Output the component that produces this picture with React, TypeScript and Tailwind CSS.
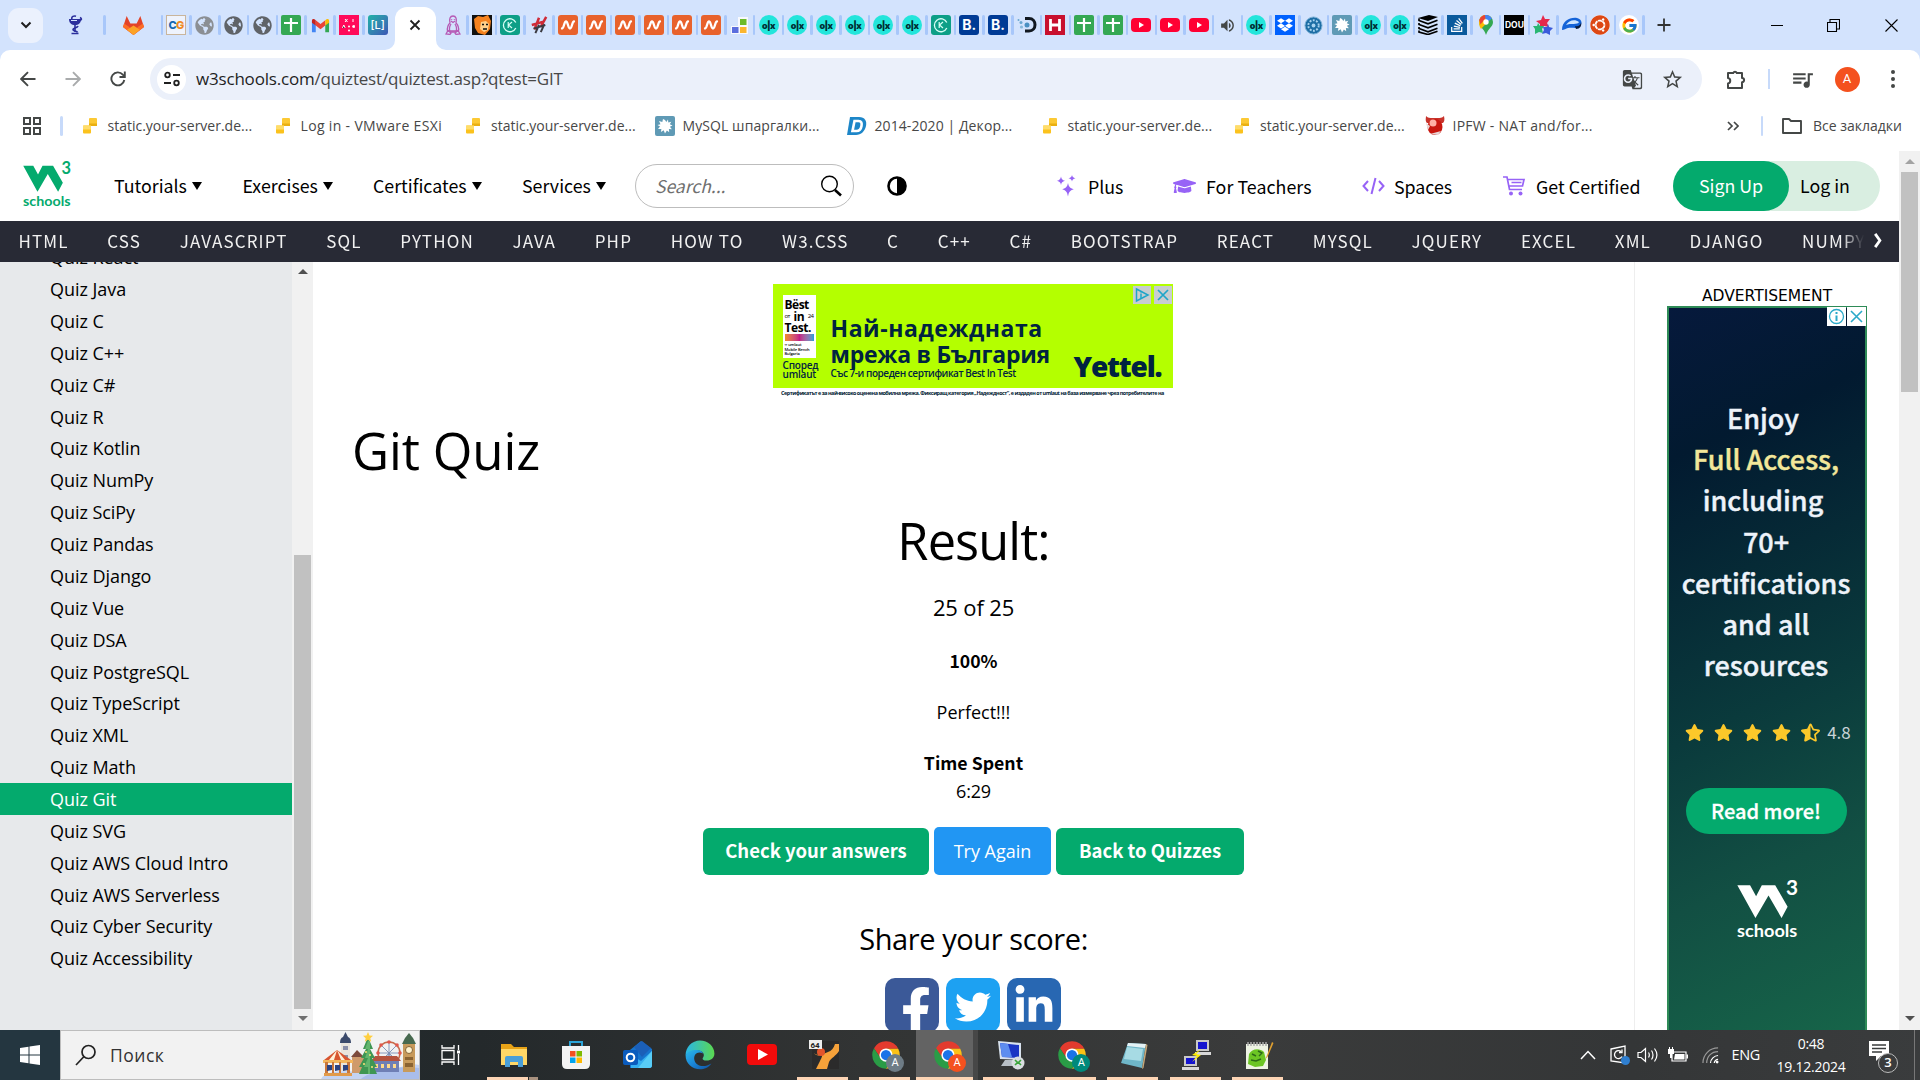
import React from "react";
import type { ReactNode } from "react";
import {
  FaDropbox, FaFacebookF, FaGlobeAmericas, FaGraduationCap, FaLinkedinIn,
  FaStackOverflow, FaStar, FaStarHalfAlt, FaTwitter, FaUbuntu,
} from "react-icons/fa";
import { FcGoogle } from "react-icons/fc";
import { MdGTranslate, MdOutlineStarBorder, MdQueueMusic, MdVolumeUp } from "react-icons/md";

/* ---------- tab favicons ---------- */

const Olx = () => (
  <span className="flex size-5 items-center justify-center rounded-full bg-[#23e5db] font-['Inter',sans-serif] text-[9px] leading-none font-black tracking-[-0.6px] text-[#002f34]">
    o|x
  </span>
);
const Orange = () => (
  <svg viewBox="0 0 20 20" className="size-5">
    <rect width="20" height="20" rx="3" fill="#e8622c" />
    <path d="M4 13.500c2 0 2-7 4-7s2 7 4 7 2-7 4-7" fill="none" stroke="#fff" strokeWidth="2.300" strokeLinecap="round" />
  </svg>
);
const Globe = ({ c = "text-[#5f6368]" }: { c?: string }) => <FaGlobeAmericas className={`size-[19px] ${c}`} />;
const GreenCross = () => (
  <svg viewBox="0 0 20 20" className="size-5">
    <rect width="20" height="20" rx="2" fill="#34a853" />
    <path d="M10 3v14M3 8h14" stroke="#fff" strokeWidth="2.200" />
  </svg>
);
const KCircle = () => (
  <svg viewBox="0 0 20 20" className="size-5">
    <rect width="20" height="20" rx="3" fill="#0d9f87" />
    <path d="M15.800 7.500A6.500 6.500 0 1 0 15.800 13" fill="none" stroke="#d7fff5" strokeWidth="1.300" />
    <path d="M8.200 7v6M12 7l-3.500 3L12 13" fill="none" stroke="#d7fff5" strokeWidth="1.200" />
  </svg>
);
const Booking = () => (
  <span className="flex size-5 items-center justify-center rounded-[3px] bg-[#003b95] font-['Inter',sans-serif] text-[14px] leading-none font-bold text-white">
    B.
  </span>
);
const Splat = () => (
  <svg viewBox="0 0 20 20" className="size-5">
    <rect width="20" height="20" rx="2" fill="#5f9ab5" />
    <path d="M10 4l1.300 2L13 3.500l.3 3 3-.8-1.500 2.600 2.700 1.200-2.600 1.200 2 2.600-3-.3.3 3.300-2.300-1.800L10 17.500l-1.300-3.200-2.800 1.800.5-3.200-3.400.2L5 10.500 2.500 9l3-.8L4 5l3.300 1L8 3z" fill="#fff" />
  </svg>
);
const Youtube = () => (
  <svg viewBox="0 0 20 20" className="size-5">
    <rect y="3" width="20" height="14" rx="4" fill="#ff0033" />
    <path d="M8 7l5 3-5 3z" fill="#fff" />
  </svg>
);
const Gitlab = () => (
  <svg viewBox="0 0 20 20" className="size-[21px]">
    <path d="M3.500 1L7 8h6l3.500-7L20 11.500 10 19 0 11.500z" fill="#e24329" />
    <path d="M0 11.500L1 8l5 3.500 4 7.500zM20 11.500L19 8l-5 3.500-4 7.500z" fill="#fc6d26" />
    <path d="M4 14l6-4 6 4-6 5z" fill="#fca326" />
  </svg>
);
const Chalice = () => (
  <svg viewBox="0 0 16 20" className="h-5 w-4">
    <path d="M2 4h12c0 4-2.500 6-6 6S2 8 2 4z" fill="#2b2f9c" />
    <path d="M5 4C4 1.500 7 .5 9 1.200M8 10v7M4.500 18.500h7M12 5.500c3 0 3-2 1-3" fill="none" stroke="#2b2f9c" strokeWidth="1.600" />
    <path d="M11 11c-1 2.500-5 1.500-5 3.500s4 1 4.500 3" fill="none" stroke="#2b2f9c" strokeWidth="1.700" />
    <path d="M4 5.500h6" stroke="#d3e3fd" strokeWidth="1" />
  </svg>
);
const Cg = () => (
  <span className="flex size-5 items-center justify-center border border-[#c9b59c] bg-[#eef3fd] font-['Inter',sans-serif] text-[11px] leading-none font-extrabold tracking-[-0.5px] text-[#1668b1]">
    C<span className="text-[#f08a24]">G</span>
  </span>
);
const PinkDots = () => (
  <svg viewBox="0 0 20 20" className="size-5">
    <rect width="20" height="20" fill="#ff0a5a" />
    <path d="M6 4l2.500 3M8.500 4L6 7M14 4v3M3.500 13l1.300-3 1.300 3M15 10v3" stroke="#fff" strokeWidth="1" />
    <circle cx="10" cy="11.500" r="1" fill="#fff" /><circle cx="10" cy="15.500" r="1" fill="#fff" /><circle cx="14.500" cy="11.500" r="1.300" fill="#fff" />
  </svg>
);
const LBracket = () => (
  <span className="flex size-5 items-center justify-center rounded-[3px] bg-linear-to-br from-[#1fb2a6] to-[#3b55b5] font-['Inter',sans-serif] text-[11px] leading-none font-medium text-white">
    [L]
  </span>
);
const Gmail = () => (
  <svg viewBox="0 0 20 20" className="size-[19px]">
    <path d="M1 5v12h4V9.500z" fill="#4285f4" />
    <path d="M19 5v12h-4V9.500z" fill="#34a853" />
    <path d="M5 10V4.500l5 4 5-4V10l-5 4z" fill="#ea4335" />
    <path d="M1 5c0-2 2-2.500 4-.5V10L1 7z" fill="#c5221f" />
    <path d="M19 5c0-2-2-2.500-4-.5V10l4-3z" fill="#fbbc04" />
  </svg>
);
const PinkPenguin = () => (
  <svg viewBox="0 0 16 20" className="h-5 w-4" fill="none" stroke="#b65ab5" strokeWidth="1.300">
    <path d="M5 8C4 4 5 1 8 1s4 3 3 7c2 2 3 5 2.500 8h-11C2 13 3 10 5 8z" />
    <path d="M6 9c-2 3-2 5-1 8M10 9c2 3 2 5 1 8M6 6l2 1.500L10 6M5.500 17h5" />
    <path d="M1 19l2-3.500L6 18l-1 1.400zM15 19l-2-3.500L10 18l1 1.400z" />
    <path d="M6.500 4v.8M9.500 4v.8" strokeWidth="1.500" />
  </svg>
);
const Lion = () => (
  <svg viewBox="0 0 20 20" className="size-5">
    <rect width="20" height="20" fill="#111" />
    <path d="M2 4l4-3 5 1 5-2 3 6-1 8-5 6-7-2-3-5z" fill="#f5821f" />
    <path d="M9 7l5-1 3 3-1 6-4 2-4-3z" fill="#ffd08a" />
    <path d="M10 9.500h2M14 9.500h2M11 14h4" stroke="#111" strokeWidth="1.400" />
  </svg>
);
const HSlash = () => (
  <svg viewBox="0 0 20 20" className="size-[18px]">
    <path d="M5 15l5-13M2 10l14-4M12 12l6-11" stroke="#cf2a37" strokeWidth="2.800" />
    <path d="M6 19l4-9M4 14l13-4M12 18l4-9" stroke="#3a3a42" strokeWidth="2.200" />
  </svg>
);
const Squares = () => (
  <svg viewBox="0 0 20 20" className="size-5">
    <path d="M1 11h7V2h10v17H1z" fill="#f8f9fd" />
    <rect x="10" y="4" width="6.500" height="6" fill="#6cbb2a" />
    <rect x="2" y="12" width="6.500" height="6" fill="#5b6ede" />
    <rect x="10" y="12" width="6.500" height="6" fill="#fbb62f" />
  </svg>
);
const DDots = () => (
  <svg viewBox="0 0 20 20" className="size-5">
    <path d="M8 3.500h4c8 0 8 12.500 0 12.500H8" fill="none" stroke="#111820" strokeWidth="3" />
    <circle cx="10" cy="10" r="2.500" fill="#4a90c2" />
    <circle cx="4" cy="7.500" r="1.500" fill="#6aa7d0" /><circle cx="4.500" cy="12" r="1.600" fill="#88b9dc" />
    <circle cx="1.500" cy="5" r="1" fill="#6aa7d0" />
  </svg>
);
const RedH = () => (
  <svg viewBox="0 0 20 20" className="size-5">
    <rect width="20" height="20" fill="#c8102e" />
    <path d="M5.500 4v12M14.500 4v12M5.500 10h9" stroke="#fff" strokeWidth="2.800" />
  </svg>
);
const BlueDotCircle = () => (
  <svg viewBox="0 0 20 20" className="size-[19px]">
    <circle cx="10" cy="10" r="9" fill="#1d6ea5" stroke="#7fb3d8" strokeWidth="1" />
    <circle cx="10" cy="10" r="5.500" fill="none" stroke="#a8d3ef" strokeWidth="2" strokeDasharray="2 1.500" />
    <circle cx="10" cy="10" r="2" fill="#a8d3ef" />
  </svg>
);
const StackedLayers = () => (
  <svg viewBox="0 0 20 20" className="size-5">
    <path d="M0 3l11-3 9 2-10 4z" fill="#000" />
    <path d="M1 3.500v2l9 3.300 9.500-3.600M1 8v1.500l9 3.300 9.500-3.600M1 12v1.500l9 3.300 9.500-3.600M1 15.500V17l9 2.500 9.500-3.300" fill="none" stroke="#000" strokeWidth="1.700" />
  </svg>
);
const MapPin = () => (
  <svg viewBox="0 0 20 20" className="size-5">
    <path d="M10 0a7 7 0 0 0-7 7c0 5 5 6 7 13 2-7 7-8 7-13a7 7 0 0 0-7-7z" fill="#34a853" />
    <path d="M3.200 5.500A7 7 0 0 1 10 0a7 7 0 0 1 5.500 2.700L5 14C3.800 12 3 10 3 7z" fill="#fbbc04" />
    <path d="M4.600 2.600A7 7 0 0 1 12 .3L4.500 9.500 3.200 5z" fill="#ea4335" />
    <path d="M9 0a7 7 0 0 1 7 3.500L10 8z" fill="#4285f4" />
    <circle cx="10" cy="7" r="2.700" fill="#fff" />
  </svg>
);
const Dou = () => (
  <span className="flex size-5 items-center justify-center bg-black font-['Inter',sans-serif] text-[8.500px] leading-none font-bold text-white">DOU</span>
);
const Stars = () => (
  <svg viewBox="0 0 20 20" className="size-5">
    <path d="M10 0l2 4 5 0-3 4 2 4-5-1-4 3 0-5-4-3 5-1z" fill="#e6294b" />
    <path d="M5 8l2 3 4 0-2 3 1 4-4-1-4 2 0-5-2-3 4 0z" fill="#2bb673" />
    <path d="M15 9l1 3 4 1-3 3 0 4-4-2-4 1 2-4-1-3 4 0z" fill="#3b5bdb" />
  </svg>
);
const Swoosh = () => (
  <svg viewBox="0 0 20 20" className="size-5">
    <path d="M0 15C0 6 8 2 15 3c5 1 6 6 2 9-3 2-7 0-11 1-2 .5-4 2-6 2z" fill="#1463d8" />
    <path d="M4 10c3-5 9-6 13-3-1 3-9 1-13 3z" fill="#cfe6ff" />
    <path d="M13 11c3 1 6-1 6-4 1 4-1 7-5 7z" fill="#0a1c3d" />
  </svg>
);

const leftTabs: ReactNode[] = [
  <Cg />, <Globe c="text-[#8b8f94]" />, <Globe />, <Globe />, <GreenCross />, <Gmail />, <PinkDots />, <LBracket />,
];
const rightTabs: ReactNode[] = [
  <PinkPenguin />, <Lion />, <KCircle />, <HSlash />,
  <Orange />, <Orange />, <Orange />, <Orange />, <Orange />, <Orange />, <Squares />,
  <Olx />, <Olx />, <Olx />, <Olx />, <Olx />, <Olx />, <KCircle />, <Booking />, <Booking />, <DDots />, <RedH />,
  <GreenCross />, <GreenCross />, <Youtube />, <Youtube />, <Youtube />, <MdVolumeUp className="size-[17px] text-[#444746]" />, <Olx />,
  <span className="flex size-5 items-center justify-center bg-[#0061fe]"><FaDropbox className="size-4 text-white" /></span>,
  <BlueDotCircle />, <Splat />, <Olx />, <Olx />, <StackedLayers />,
  <span className="flex size-5 items-center justify-center bg-[#0a5a9c]"><FaStackOverflow className="size-4 text-white" /></span>,
  <MapPin />, <Dou />, <Stars />, <Swoosh />,
  <span className="flex size-5 items-center justify-center rounded-full bg-white"><FaUbuntu className="size-5 text-[#dd4814]" /></span>,
  <span className="flex size-5 items-center justify-center rounded-full bg-white"><FcGoogle className="size-[17px]" /></span>,
];

const Sep = () => <span className="h-5 w-[2.500px] shrink-0 rounded-full bg-[#a8c7fa]" />;

function TabStrip() {
  return (
    <div className="flex h-[50px] items-center bg-[#d3e3fd] pl-2">
      <div className="flex size-[35px] shrink-0 items-center justify-center rounded-[11px] bg-[#ebf1fd]">
        <svg viewBox="0 0 12 12" className="size-3"><path d="M1.500 3.500L6 8l4.500-4.500" fill="none" stroke="#1f1f1f" strokeWidth="2" /></svg>
      </div>
      <div className="flex w-[60px] shrink-0 items-center justify-center pl-[3px]"><Chalice /></div>
      <Sep />
      <div className="flex w-[55px] shrink-0 items-center justify-center"><Gitlab /></div>
      {leftTabs.map((icon, i) => (
        <div key={i} className="flex w-[28.800px] shrink-0 items-center">
          <Sep />
          <div className="flex flex-1 items-center justify-center">{icon}</div>
        </div>
      ))}
      <div className="flex h-full w-[62px] shrink-0 items-end">
        <svg viewBox="0 0 10 10" className="ml-[-6px] size-[10px] shrink-0"><path d="M0 10A10 10 0 0 0 10 0V10z" fill="#fff" /></svg>
        <div className="flex h-[43px] w-[41px] shrink-0 items-center justify-center rounded-t-[12px] bg-white pb-[7px]">
          <svg viewBox="0 0 12 12" className="size-3"><path d="M1.500 1.500l9 9M10.500 1.500l-9 9" stroke="#1f1f1f" strokeWidth="1.800" /></svg>
        </div>
        <svg viewBox="0 0 10 10" className="size-[10px] shrink-0"><path d="M10 10A10 10 0 0 1 0 0V10z" fill="#fff" /></svg>
      </div>
      <div className="ml-[-13px] flex shrink-0">
        {rightTabs.map((icon, i) => (
          <div key={i} className="flex w-[28.690px] shrink-0 items-center">
            <div className="flex flex-1 items-center justify-center">{icon}</div>
            <Sep />
          </div>
        ))}
      </div>
      <svg viewBox="0 0 14 14" className="ml-[12px] size-[14px] shrink-0"><path d="M7 .5v13M.5 7h13" stroke="#333" strokeWidth="1.800" /></svg>
      <div className="ml-auto flex items-center">
        <div className="flex w-[57px] justify-center"><span className="h-px w-3 bg-black" /></div>
        <div className="flex w-[57px] justify-center">
          <svg viewBox="0 0 13 13" className="size-[13px]"><path d="M.5 3.500h9v9h-9zM3 3V.5h9.500V10H10" fill="none" stroke="#000" strokeWidth="1.100" /></svg>
        </div>
        <div className="flex w-[58px] justify-center">
          <svg viewBox="0 0 13 13" className="size-[13px]"><path d="M.5.5l12 12M12.500.5l-12 12" stroke="#000" strokeWidth="1.100" /></svg>
        </div>
      </div>
    </div>
  );
}

function Toolbar() {
  return (
    <div className="bg-[#d3e3fd]">
      <div className="flex h-[58px] items-center rounded-t-[10px] bg-white">
        <div className="flex w-[150px] items-center pl-[20px]">
          <svg viewBox="0 0 16 16" className="size-4"><path d="M15.500 8H1.500M8 1.200L1.200 8 8 14.800" fill="none" stroke="#444746" strokeWidth="1.900" /></svg>
          <svg viewBox="0 0 16 16" className="ml-[29px] size-4"><path d="M.5 8h14M8 1.200L14.800 8 8 14.800" fill="none" stroke="#a9abac" strokeWidth="1.900" /></svg>
          <svg viewBox="0 0 16 16" className="ml-[29px] size-4"><path d="M14.300 9A6.500 6.500 0 1 1 12.800 3.600L14.500 5.400M14.800.5V6H9.500" fill="none" stroke="#444746" strokeWidth="1.900" /></svg>
        </div>
        <div className="flex h-[42px] w-[1552px] items-center rounded-full bg-[#ebf0fa] pl-[7px]">
          <div className="flex size-[29px] items-center justify-center rounded-full bg-white">
            <svg viewBox="0 0 16 16" className="size-4">
              <path d="M9 4h7M0 12h7" stroke="#1f1f1f" strokeWidth="1.800" />
              <circle cx="3.500" cy="4" r="2.300" fill="none" stroke="#1f1f1f" strokeWidth="1.800" />
              <circle cx="12.500" cy="12" r="2.300" fill="none" stroke="#1f1f1f" strokeWidth="1.800" />
            </svg>
          </div>
          <span className="ml-[10px] font-['Open_Sans',sans-serif] text-[17px] tracking-[-0.190px] text-[#474747]">
            <span className="text-[#1f1f1f]">w3schools.com</span>/quiztest/quiztest.asp?qtest=GIT
          </span>
          <MdGTranslate className="ml-auto size-[21px] text-[#444746]" />
          <MdOutlineStarBorder className="mr-[18px] ml-[18px] size-[23px] text-[#444746]" />
        </div>
        <svg viewBox="0 0 20 20" className="ml-[24px] size-5">
          <path d="M2 4h5.200a2 2 0 0 1 3.600 0H16v5a2 2 0 0 1 0 4.200V19H2v-4.500c3-.5 3-5 0-5.500z" fill="none" stroke="#444746" strokeWidth="2" strokeLinejoin="round" />
        </svg>
        <span className="ml-[22px] h-5 w-[1.500px] bg-[#c7dafa]" />
        <MdQueueMusic className="ml-[20px] size-[25px] text-[#444746]" />
        <span className="ml-[20px] flex size-[25px] items-center justify-center rounded-full bg-[#f4511e] font-['Roboto',sans-serif] text-[13px] text-white">A</span>
        <div className="ml-[31px] flex flex-col gap-[3px]">
          <i className="size-1 rounded-full bg-[#444746]" /><i className="size-1 rounded-full bg-[#444746]" /><i className="size-1 rounded-full bg-[#444746]" />
        </div>
      </div>
    </div>
  );
}

const YellowSquares = () => (
  <svg viewBox="0 0 16 16" className="size-4">
    <rect x="7" y="0" width="8" height="8" rx="1" fill="#fcc934" /><rect x="7" y="5.500" width="8" height="2.500" fill="#eab010" />
    <rect x="1" y="7.500" width="8" height="8" rx="1" fill="#fbc21d" /><rect x="1" y="7.500" width="8" height="4" fill="#ffdd6b" />
  </svg>
);
const DLogo = () => (
  <svg viewBox="0 0 20 20" className="size-5">
    <path d="M3 1h9c6 0 8 4 7 9s-5 9-10 9H0z" fill="#1d86c8" />
    <path d="M7.500 5h4c3 0 3.500 2 3 5s-2.500 5-5 5H5.500z" fill="none" stroke="#fff" strokeWidth="2.600" />
  </svg>
);
const Daemon = () => (
  <svg viewBox="0 0 20 20" className="size-5">
    <path d="M1 0c2 2 4 2 6 2h6c2 0 4 0 6-2 1 4 0 6-1 7H2C0 5 1 2 1 0z" fill="#c8332b" />
    <ellipse cx="10" cy="11" rx="7.500" ry="8" fill="#c9170f" /><circle cx="8" cy="7" r="3.500" fill="#ffb0a4" />
    <path d="M1 7l4 3-2 4zM5 18l8 1 3-4z" fill="#e8d6d6" />
  </svg>
);

const bookmarks: { icon: ReactNode; label: string; w: string }[] = [
  { icon: <YellowSquares />, label: "static.your-server.de...", w: "w-[193px]" },
  { icon: <YellowSquares />, label: "Log in - VMware ESXi", w: "w-[190.500px] tracking-[0.340px]" },
  { icon: <YellowSquares />, label: "static.your-server.de...", w: "w-[191.500px]" },
  { icon: <Splat />, label: "MySQL шпаргалки...", w: "w-[192px] tracking-[0.080px]" },
  { icon: <DLogo />, label: "2014-2020 | Декор...", w: "w-[193px] tracking-[0.080px]" },
  { icon: <YellowSquares />, label: "static.your-server.de...", w: "w-[192.500px]" },
  { icon: <YellowSquares />, label: "static.your-server.de...", w: "w-[192.500px]" },
  { icon: <Daemon />, label: "IPFW - NAT and/for...", w: "w-[190px] tracking-[0.250px]" },
];

function Bookmarks() {
  return (
    <div className="flex h-[43px] items-center bg-white pb-[8px] font-['Open_Sans',sans-serif] text-[14px] text-[#474747]">
      <svg viewBox="0 0 18 18" className="ml-[23px] size-[18px]">
        <path d="M1 1h6v6H1zM11 1h6v6h-6zM1 11h6v6H1zM11 11h6v6h-6z" fill="none" stroke="#444746" strokeWidth="2" />
      </svg>
      <span className="mr-[17px] ml-[19px] h-5 w-[2.500px] rounded bg-[#c7dafa]" />
      {bookmarks.map((b, i) => (
        <div key={i} className={`flex shrink-0 items-center gap-2 whitespace-nowrap ${b.w}`}>
          <span className="flex size-5 items-center justify-center">{b.icon}</span>
          <span className="relative top-[-0.500px]">{b.label}</span>
        </div>
      ))}
      <svg viewBox="0 0 12 12" className="mr-[22px] ml-auto size-3"><path d="M1 2l4 4-4 4M7 2l4 4-4 4" fill="none" stroke="#444746" strokeWidth="1.700" /></svg>
      <span className="h-5 w-[2.500px] rounded bg-[#c7dafa]" />
      <svg viewBox="0 0 20 16" className="mr-[11px] ml-[19px] h-4 w-5"><path d="M1 1h6l2 2h10v12H1z" fill="none" stroke="#444746" strokeWidth="1.900" strokeLinejoin="round" /></svg>
      <span className="relative top-[-0.500px] mr-[18px]">Все закладки</span>
    </div>
  );
}

/* ---------- w3schools page ---------- */

function W3Logo({ className }: { className: string }) {
  return (
    <svg viewBox="353 568 182 178" className={className} fill="currentColor">
      <path d="M354 586H392L410 619L427 586H467L504 650L486 684L447 617L408 684z" />
      <text x="499" y="616" fontSize="62" fontWeight="700" fontFamily="Lato, sans-serif" textLength="36" lengthAdjust="spacingAndGlyphs">3</text>
      <text x="353" y="740" fontSize="52" fontWeight="700" fontFamily="Lato, sans-serif" textLength="180" lengthAdjust="spacingAndGlyphs">schools</text>
    </svg>
  );
}

const Caret = () => <span className="ml-[5px] h-0 w-0 border-x-[5.500px] border-t-[8px] border-x-transparent border-t-black" />;

const menus = [
  ["Tutorials", "w-[128.500px]"], ["Exercises", "w-[130.500px]"], ["Certificates", "w-[149px]"], ["Services", "w-[113px]"],
];

function Header() {
  return (
    <div className="flex h-[70px] shrink-0 items-center bg-white font-['Noto_Sans_CJK_SC',sans-serif] text-[17.800px] text-black">
      <W3Logo className="mt-[-4px] ml-[22px] h-[47px] w-[50px] text-[#04aa6d]" />
      <div className="mt-[-1px] ml-[42px] flex">
        {menus.map(([m, w]) => (
          <div key={m} className={`flex items-center ${w}`}>{m}<Caret /></div>
        ))}
      </div>
      <div className="flex h-11 w-[219px] items-center rounded-[25px] border-[1.500px] border-[#bdbdbd] bg-white pr-[11px] pl-[19px]">
        <span className="text-[17.500px] text-[#6f6f6f] italic">Search...</span>
        <svg viewBox="0 0 22 22" className="ml-auto size-[22px]">
          <circle cx="9.500" cy="9" r="7.800" fill="none" stroke="#000" strokeWidth="1.400" /><path d="M15 15l6 5.500" stroke="#000" strokeWidth="2.600" />
        </svg>
      </div>
      <svg viewBox="0 0 20 20" className="ml-[33px] size-5">
        <circle cx="10" cy="10" r="8.500" fill="#fff" stroke="#000" strokeWidth="2.600" /><path d="M10 1.500a8.500 8.500 0 0 1 0 17z" fill="#000" />
      </svg>
      <div className="ml-[150px] flex w-[116px] items-center">
        <svg viewBox="0 0 20 22" className="h-[22px] w-5 text-[#9763f6]" fill="currentColor">
          <path d="M11 8c.9 3.800 1.700 5 5.800 6.300C12.700 15.600 11.900 17 11 21.500c-.9-4.500-1.700-5.900-5.800-7.200C9.300 13 10.100 11.800 11 8zM4 1.500c.6 2.600 1.200 3.500 4 4.300C5.200 6.700 4.600 7.500 4 10 3.400 7.500 2.800 6.700 0 5.800c2.800-.8 3.400-1.700 4-4.300zM15 0c.5 1.900 1 2.500 3.500 3.200C16 3.900 15.500 4.600 15 6.500c-.5-1.900-1-2.600-3.500-3.300C14 2.500 14.500 1.900 15 0z" />
        </svg>
        <span className="ml-[11px]">Plus</span>
      </div>
      <div className="flex w-[189px] items-center">
        <FaGraduationCap className="h-[20px] w-[23px] text-[#9763f6]" /><span className="ml-[10px] tracking-[0.050px]">For Teachers</span>
      </div>
      <div className="flex w-[141px] items-center">
        <svg viewBox="0 0 23 18" className="h-[18px] w-[23px]"><path d="M6 4L1.500 9 6 14M17 4l4.500 5L17 14M13.500 1l-4 16" fill="none" stroke="#9763f6" strokeWidth="2" /></svg>
        <span className="ml-[9px]">Spaces</span>
      </div>
      <div className="flex w-[170px] items-center">
        <svg viewBox="0 0 23 20" className="h-5 w-[23px]">
          <path d="M0 1h4l2.500 12.500H19M4.500 3.500H21L19.500 10H6M8.500 6.500h10" fill="none" stroke="#9763f6" strokeWidth="1.700" />
          <circle cx="8" cy="17.500" r="2" fill="#9763f6" /><circle cx="17.500" cy="17.500" r="2" fill="#9763f6" />
        </svg>
        <span className="ml-[10px] tracking-[0.050px]">Get Certified</span>
      </div>
      <div className="flex h-[50px] w-[207px] shrink-0 rounded-full bg-[#d9eee1]">
        <div className="flex w-[116px] items-center justify-center rounded-full bg-[#04aa6d] pb-px text-white">Sign Up</div>
        <div className="flex items-center pb-px pl-[11px]">Log in</div>
      </div>
    </div>
  );
}

const topics = [
  "HTML", "CSS", "JAVASCRIPT", "SQL", "PYTHON", "JAVA", "PHP", "HOW TO", "W3.CSS", "C", "C++", "C#",
  "BOOTSTRAP", "REACT", "MYSQL", "JQUERY", "EXCEL", "XML", "DJANGO", "NUMPY",
];

function TopicBar() {
  return (
    <div className="flex h-[41px] shrink-0 items-center bg-[#282a35] pb-[2px] font-['Noto_Sans_CJK_SC',sans-serif] text-[17px] tracking-[1.150px] text-[#f1f1f1]">
      <div className="flex w-[1866px] gap-[38.600px] overflow-hidden pl-[18.500px] whitespace-nowrap [mask-image:linear-gradient(to_right,#000_1842px,transparent_1864px)]">
        {topics.map((t) => <span key={t}>{t}</span>)}
      </div>
      <svg viewBox="0 0 10 16" className="ml-[7px] h-[15px] w-[10px]"><path d="M2 1l5 7-5 7" fill="none" stroke="#fff" strokeWidth="3" /></svg>
    </div>
  );
}

const quizzes = [
  "React", "Java", "C", "C++", "C#", "R", "Kotlin", "NumPy", "SciPy", "Pandas", "Django", "Vue", "DSA", "PostgreSQL",
  "TypeScript", "XML", "Math", "Git", "SVG", "AWS Cloud Intro", "AWS Serverless", "Cyber Security", "Accessibility",
];

function Sidebar() {
  return (
    <div className="flex w-[313px] shrink-0">
      <div className="w-[292px] overflow-hidden bg-[#e7e9eb] font-['Open_Sans',sans-serif] text-[18px] tracking-[-0.050px]">
        <div className="mt-[-20.500px]">
          {quizzes.map((q) => (
            <div key={q} className={`flex h-[31.870px] items-center pt-[0.800px] pl-[50px] ${q === "Git" ? "bg-[#04aa6d] text-white" : "text-black"}`}>
              Quiz {q}
            </div>
          ))}
        </div>
      </div>
      <div className="flex w-[21px] flex-col items-center bg-[#f1f1f1] pt-[7px] pb-[9px]">
        <span className="h-0 w-0 border-x-[5px] border-b-[5px] border-x-transparent border-b-[#505050]" />
        <span className="mt-auto h-[454px] w-[17px] bg-[#c1c1c1]" />
        <span className="mt-[7px] h-0 w-0 border-x-[5px] border-t-[5px] border-x-transparent border-t-[#707070]" />
      </div>
    </div>
  );
}

function Banner() {
  return (
    <div className="relative mt-[22px] mr-[2px] h-[115px] w-[400px]">
      <div className="flex h-[104px] overflow-hidden bg-[#b4ff00] font-['Open_Sans',sans-serif] text-[#002340]">
        <div className="w-[58px] shrink-0 pt-[11px] pl-[10px]">
          <div className="h-[63px] w-[33px] bg-white px-[2px] pt-[4px] text-[12px] leading-[12px] font-bold tracking-[-0.500px] text-black">
            Bëst
            <div className="flex items-center justify-between leading-[11px]"><small className="text-[6px] font-normal">от</small>in<small className="text-[6px] font-normal">24</small></div>
            <div className="leading-[11px] tracking-[-0.400px]">Test.</div>
            <div className="mt-px h-[7px] bg-linear-to-r from-[#f08a1d] via-[#c31c86] to-[#13a0d4]" />
            <div className="mt-[2px] text-[4px] leading-[4.500px] font-semibold tracking-[-0.100px] whitespace-nowrap">∞ umlaut<br />Mobile Bench<br />Bulgaria</div>
          </div>
          <div className="mt-[3px] text-[10px] leading-[9px] font-semibold tracking-[-0.200px]">Според<br />umlaut</div>
        </div>
        <div className="w-[243px] shrink-0 pt-[31px] whitespace-nowrap">
          <div className="text-[23px] leading-[26px] font-bold tracking-[0.550px]">Най-надеждната</div>
          <div className="text-[23px] leading-[26px] font-bold tracking-[-0.250px]">мрежа в България</div>
          <div className="text-[10px] leading-[12px] font-semibold tracking-[-0.460px]">Със 7-и пореден сертификат Best In Test</div>
        </div>
        <div className="pt-[61px] text-[28px] leading-[42px] font-extrabold tracking-[-1.150px]">Yettel.</div>
      </div>
      <div className="flex h-[11px] items-center justify-center text-center font-['Open_Sans',sans-serif] text-[5.400px] leading-none font-bold tracking-[-0.460px] whitespace-nowrap text-[#001a33]">
        Сертификатът е за най-високо оценена мобилна мрежа. Фиксиращ категория „Надеждност“, е издаден от umlaut на база измерване чрез потребителите на
      </div>
      <div className="absolute top-[2px] right-px flex gap-[3px]">
        <svg viewBox="0 0 18 18" className="size-[18px] bg-[#c8cdd0]"><path d="M3.500 3l11.500 6-11.500 6z" fill="none" stroke="#1fa5c9" strokeWidth="1.500" /><path d="M8 7.500v5M8 5.500v1" stroke="#1fa5c9" strokeWidth="1.500" /></svg>
        <svg viewBox="0 0 18 18" className="size-[18px] bg-[#c8cdd0]"><path d="M4 4l10 10M14 4L4 14" stroke="#1fa5c9" strokeWidth="1.700" /></svg>
      </div>
    </div>
  );
}

function Main() {
  return (
    <div className="flex min-w-0 flex-1 flex-col items-center overflow-hidden bg-white font-['Open_Sans',sans-serif] text-[18px] text-black">
      <Banner />
      <h1 className="mt-[17px] h-[68px] self-start pl-[39px] text-[51px] leading-[68px] tracking-[-0.150px]">Git Quiz</h1>
      <h1 className="mt-[23px] h-[68px] text-[50.500px] leading-[68px] tracking-[-0.900px]">Result:</h1>
      <div className="mt-[16px] h-8 text-[22px] leading-8 tracking-[-0.150px]">25 of 25</div>
      <div className="mt-[24px] h-7 font-['Noto_Sans_CJK_SC',sans-serif] text-[17.600px] leading-7 font-bold">100%</div>
      <div className="mt-[23px] h-7 leading-7">Perfect!!!</div>
      <div className="mt-[22px] h-7 font-['Noto_Sans_CJK_SC',sans-serif] text-[17.700px] leading-7 font-bold">Time Spent</div>
      <div className="mt-px h-7 leading-7 tracking-[-0.200px]">6:29</div>
      <div className="mt-[22px] flex h-12 items-end gap-[5px] font-['Noto_Sans_CJK_SC',sans-serif] text-[18.500px] font-bold text-white">
        <div className="flex h-[47px] w-[226px] items-center justify-center rounded-[6px] bg-[#04aa6d] pb-px">Check your answers</div>
        <div className="flex h-12 w-[117px] items-center justify-center rounded-[5px] bg-[#2196f3] font-['Open_Sans',sans-serif] text-[18px] font-normal">Try Again</div>
        <div className="flex h-[47px] w-[188px] items-center justify-center rounded-[6px] bg-[#04aa6d] pb-px">Back to Quizzes</div>
      </div>
      <div className="mt-[44px] h-10 text-[29px] leading-10 tracking-[-0.400px]">Share your score:</div>
      <div className="mt-[19px] mr-px flex gap-[7px]">
        <div className="flex size-[54px] items-end justify-end rounded-[10px] bg-[#3b5998]"><FaFacebookF className="mr-[-1px] mb-[-3px] size-[48px] text-white" /></div>
        <div className="flex size-[54px] items-center justify-center rounded-[10px] bg-[#1da1f2] pt-[4px]"><FaTwitter className="size-[36px] text-white" /></div>
        <div className="flex size-[54px] items-center justify-center rounded-[10px] bg-[#2867b2] pt-[2px]"><FaLinkedinIn className="size-[42px] text-white" /></div>
      </div>
    </div>
  );
}

function SideAd() {
  return (
    <div className="flex w-[265px] shrink-0 flex-col items-center overflow-hidden border-l border-[#eee] bg-white">
      <div className="mt-[24px] h-5 font-['DejaVu_Sans',sans-serif] text-[15.500px] leading-5 text-black">ADVERTISEMENT</div>
      <div className="relative flex h-[760px] w-[200px] shrink-0 flex-col items-center border-[2.500px] border-[#2e8b57] bg-[linear-gradient(155deg,#06193c_0%,#021a30_18%,#0a3a3c_52%,#124f43_72%,#17684a_100%)] pr-[2px] font-['Noto_Sans_CJK_SC',sans-serif]">
        <div className="mt-[89px] text-center text-[27px] leading-[41.200px] font-medium text-[#eef3fa] [-webkit-text-stroke:0.400px]">
          <div>Enjoy&nbsp;</div>
          <div className="text-[#f2e79a]">Full Access,</div>
          <div>including&nbsp;</div>
          <div>70+</div>
          <div>certifications</div>
          <div>and all</div>
          <div>resources</div>
        </div>
        <div className="mt-[37px] flex h-5 items-center gap-[10px] pl-[4px] text-[#fcc82a]">
          <FaStar className="size-[19px]" /><FaStar className="size-[19px]" /><FaStar className="size-[19px]" /><FaStar className="size-[19px]" /><FaStarHalfAlt className="size-[19px]" />
          <span className="ml-[-3px] text-[17px] leading-5 text-[#c9d3d6]">4.8</span>
        </div>
        <div className="mt-[46px] flex h-[46px] w-[161px] items-center justify-center rounded-full bg-[#04aa6d] text-[20px] font-medium text-white [-webkit-text-stroke:0.300px]">Read more!</div>
        <W3Logo className="mt-[45px] ml-[2px] h-[60px] w-[61px] text-white" />
        <div className="absolute top-[-1px] right-[-1px] flex gap-px">
          <svg viewBox="0 0 19 19" className="size-[19px] bg-white"><circle cx="9.500" cy="9.500" r="7" fill="none" stroke="#2aa9c9" strokeWidth="1.300" /><path d="M9.500 8.500V14M9.500 5v2" stroke="#2aa9c9" strokeWidth="2" /></svg>
          <svg viewBox="0 0 19 19" className="size-[19px] bg-white"><path d="M4 4l11 11M15 4L4 15" stroke="#2aa9c9" strokeWidth="1.600" /></svg>
        </div>
      </div>
    </div>
  );
}

function PageScrollbar() {
  return (
    <div className="flex w-[21px] shrink-0 flex-col items-center bg-[#f1f1f1] pt-[8px] pb-[9px]">
      <span className="h-0 w-0 border-x-[5px] border-b-[5px] border-x-transparent border-b-[#a3a3a3]" />
      <span className="mt-[8px] h-[220px] w-[17px] bg-[#c1c1c1]" />
      <span className="mt-auto h-0 w-0 border-x-[5px] border-t-[5px] border-x-transparent border-t-[#505050]" />
    </div>
  );
}

/* ---------- Windows taskbar ---------- */

function Chrome({ badge }: { badge: string }) {
  return (
    <span className="relative">
      <svg viewBox="0 0 24 24" className="size-[30px]">
        <path d="M12 7h9.800A11 11 0 0 0 2.400 6.600l5.300 8z" fill="#e33b2e" />
        <path d="M12 7h9.800A11 11 0 0 1 12 23l4.300-8.500z" fill="#fbc116" />
        <path d="M7.670 14.500L2.400 6.600A11 11 0 0 0 12 23l4.330-8.500z" fill="#2a9c46" />
        <circle cx="12" cy="12" r="5.300" fill="#fff" /><circle cx="12" cy="12" r="4.100" fill="#1a73e8" />
      </svg>
      <span className={`absolute right-[-3px] bottom-[-2px] flex size-[18px] items-center justify-center rounded-full font-['Roboto',sans-serif] text-[11px] text-white ${badge}`}>A</span>
    </span>
  );
}

const FolderIcon = () => (
  <svg viewBox="0 0 28 28" className="size-7">
    <path d="M1 3h10l3 3h13v18H1z" fill="#e8a317" /><path d="M1 8h26v16H1z" fill="#ffd767" />
    <path d="M5 26v-9q0-2 2-2h14q2 0 2 2v9h-5v-5h-8v5z" fill="#4a9fd8" />
  </svg>
);
const StoreIcon = () => (
  <svg viewBox="0 0 30 30" className="size-[30px]">
    <path d="M9 6V2h12v4" fill="none" stroke="#2ba4d8" strokeWidth="2" />
    <path d="M1 6h28v18q0 5-5 5H6q-5 0-5-5z" fill="#f3f3f3" />
    <path d="M9 11h5.500v5.500H9z" fill="#f25022" /><path d="M15.500 11H21v5.500h-5.500z" fill="#7fba00" />
    <path d="M9 17.500h5.500V23H9z" fill="#00a4ef" /><path d="M15.500 17.500H21V23h-5.500z" fill="#ffb900" />
  </svg>
);
const OutlookIcon = () => (
  <svg viewBox="0 0 30 28" className="h-7 w-[30px]">
    <path d="M7 9L18 0l11 8v16q0 3-3 3H7z" fill="#1673cc" /><path d="M11 6l8-6 9 7-9 9z" fill="#1b5fb8" />
    <path d="M8 14l10 6 11-10v14q0 3-3 3H8z" fill="#35b0f1" /><path d="M29 10v14q0 3-3 3H15z" fill="#58cdf7" /><rect y="9" width="15" height="15" rx="2" fill="#0a5bbd" />
    <circle cx="7.500" cy="16.500" r="3.800" fill="none" stroke="#fff" strokeWidth="2" />
  </svg>
);
const EdgeIcon = () => (
  <svg viewBox="0 0 512 512" className="size-[30px]">
    <defs>
      <linearGradient id="edgeA" x1="0" y1="0" x2="1" y2="1"><stop offset="0" stopColor="#2bb8e8" /><stop offset=".5" stopColor="#1a86d8" /><stop offset="1" stopColor="#0f4fa0" /></linearGradient>
      <linearGradient id="edgeB" x1="0" y1="0" x2="1" y2="0"><stop offset="0" stopColor="#29b6e8" /><stop offset="1" stopColor="#5bd94f" /></linearGradient>
    </defs>
    <path d="M10 260C10 120 120 10 256 10s246 100 246 220c0 80-60 120-130 120-60 0-80-20-70-40 50-60 0-130-80-130C110 180 40 230 10 260z" fill="url(#edgeB)" />
    <path d="M10 260c30-60 90-90 190-90 60 0 100 30 110 60-90-50-170 10-150 110 30 120 180 130 290 60-50 70-120 100-190 100C120 500 10 400 10 260z" fill="url(#edgeA)" />
  </svg>
);
const YtIcon = () => (
  <svg viewBox="0 0 30 30" className="size-[30px]"><rect y="4" width="30" height="21" rx="4" fill="#f30b0b" /><path d="M11 9l10 5.500L11 20z" fill="#fff" /></svg>
);
const App64 = () => (
  <svg viewBox="0 0 30 30" className="size-[30px]">
    <rect x="3" y="1" width="27" height="28" fill="#2b2b2b" />
    <path d="M5 13c4 4 9 1 14-1 3-1 6-4 7-8h4v7c-3 5-8 7-10 11l-2 7H7l4-8c2-4 3-6 1-6-3 1-6 0-7-2z" fill="#f6a23a" />
    <circle cx="12" cy="12" r="4" fill="#e2552c" />
    <rect width="13" height="9" fill="#eee" /><text x="1.500" y="7.500" fontSize="8" fontWeight="700" fontFamily="Roboto, sans-serif" fill="#222">64</text>
  </svg>
);
const RdpIcon = () => (
  <svg viewBox="0 0 30 30" className="size-[30px]">
    <path d="M3 1l23 2v17L5 19z" fill="#d8e2ee" /><path d="M5 3l19 2v13L7 17z" fill="#1a35c4" /><path d="M5 3l8 1 4 13-10 0z" fill="#5d8df0" />
    <path d="M10 20h8l2 6H6z" fill="#b8bfc6" /><circle cx="23" cy="23" r="6.500" fill="#d9dde0" /><path d="M20 20l2.500 2.500L20 25M26 20l-2.500 2.500L26 25" fill="none" stroke="#3ba43b" strokeWidth="1.600" />
  </svg>
);
const NotepadIcon = () => (
  <svg viewBox="0 0 30 30" className="size-[30px]">
    <path d="M9 3l18 1-4 24L2 23z" fill="#6fb6c8" /><path d="M9 3l18 1-1 4L8 6z" fill="#e4f2f5" /><path d="M8 7l16 2-2 12L5 19z" fill="#a7dbe4" /><path d="M27 4l1.500 1-4 23-1.500 1z" fill="#c9a878" />
  </svg>
);
const PuttyIcon = () => (
  <svg viewBox="0 0 30 30" className="size-[30px]">
    <path d="M15 1h11v9H15zM3 17h11v8H3z" fill="#1414d0" stroke="#c9c9c9" strokeWidth="2" />
    <path d="M13 12h16v3H13zM0 27h17v3H0z" fill="#d8d8d8" /><path d="M19 9l-9 6 5 1-5 6 9-7-5-1z" fill="#ffee00" />
  </svg>
);
const NppIcon = () => (
  <svg viewBox="0 0 30 30" className="size-[30px]">
    <path d="M2 4h22v25H2z" fill="#eef3e4" /><path d="M3 5h20M3 3h20" stroke="#aaa" strokeWidth="1.500" strokeDasharray="2 1" />
    <path d="M5 14c3-6 11-6 15-2l2 8-3 6-8 1-7-3z" fill="#6cc524" /><path d="M8 14l4 2M14 11l4 2-3 3M7 20l5 1 5-2" fill="none" stroke="#2c6a17" strokeWidth="1.400" />
    <path d="M28 2l1.500 1-6 14-2 2z" fill="#e0a030" />
  </svg>
);

const apps: { icon: ReactNode; open?: boolean; active?: boolean; stacked?: boolean }[] = [
  { icon: <FolderIcon />, open: true, stacked: true },
  { icon: <StoreIcon /> },
  { icon: <OutlookIcon /> },
  { icon: <EdgeIcon /> },
  { icon: <YtIcon /> },
  { icon: <App64 />, open: true },
  { icon: <Chrome badge="bg-[#6e7c86]" />, open: true },
  { icon: <Chrome badge="bg-[#f4511e]" />, open: true, active: true },
  { icon: <RdpIcon />, open: true },
  { icon: <Chrome badge="bg-[#00897b]" />, open: true },
  { icon: <NotepadIcon />, open: true },
  { icon: <PuttyIcon />, open: true },
  { icon: <NppIcon />, open: true },
];

const Fair = () => (
  <svg viewBox="0 0 98 48" className="ml-auto h-12 w-[98px]">
    <path d="M0 48C6 38 30 40 50 42S85 30 98 34v14z" fill="#c4d3f2" /><path d="M40 48c8-8 40-14 58-11v11z" fill="#a9bdea" />
    <circle cx="68" cy="22" r="11" fill="none" stroke="#c66a4a" strokeWidth="1.500" />
    <path d="M68 11v22M57 22h22M60 14l16 16M76 14L60 30M68 22l-7 18M68 22l7 18" stroke="#7b8fb5" strokeWidth=".9" />
    <g fill="#e2574c"><circle cx="68" cy="11" r="1.800" /><circle cx="79" cy="22" r="1.800" /><circle cx="57" cy="22" r="1.800" /><circle cx="76" cy="14" r="1.800" /><circle cx="60" cy="14" r="1.800" /></g>
    <rect x="52" y="29" width="26" height="12" fill="#6f7fb5" /><path d="M50 30l4-5h22l4 5z" fill="#b5533e" />
    <path d="M54 33h3v4h-3zM60 33h3v4h-3zM66 33h3v4h-3zM72 33h3v4h-3z" fill="#ffd98a" />
    <path d="M20 12h9v28h-9z" fill="#e9e4dc" /><path d="M19 12q0-5 3-6l2.500-5L27 6q3 1 3 6z" fill="#3b4a6b" /><path d="M22 15h5v4h-5zM22 24h5v4h-5z" fill="#8a8fa8" />
    <path d="M82 13h12v28H82z" fill="#c79a5b" /><path d="M81 13l3-6 4-5 4 5 3 6z" fill="#47694f" /><circle cx="88" cy="19" r="3.500" fill="#fff3cf" stroke="#6b4a20" strokeWidth=".8" /><path d="M84 26h8v3h-8zM84 32h8v4h-8z" fill="#8a6332" />
    <path d="M31 25h12v17H31z" fill="#cf9a6c" /><path d="M30 26l6-7 7 7z" fill="#7d4a3c" />
    <path d="M3 29l13-10 14 10z" fill="#d8552f" /><path d="M8 29l8-10-3 10zM20 29l-4-10 8 10z" fill="#fff0d8" /><path d="M2 29h30v3H2z" fill="#f3b65c" />
    <path d="M4 31h3v11H4zM11 31h2v11h-2zM18 31h2v11h-2zM26 31h3v11h-3z" fill="#c9773c" /><path d="M6 34h5v5l-5 1zM14 34h5v5l-5 1zM22 34h5v5l-5 1z" fill="#2d4380" /><path d="M3 42h28v3H3z" fill="#e19a4a" />
    <path d="M47 6l-5 12h3l-5 9h3l-5 9h3l-3 7h18l-3-7h3l-5-9h3l-5-9h3z" fill="#3f9652" /><path d="M47 10l-3 8h3l-3 9h3l-4 9h4v7h2V10z" fill="#62b56c" />
    <path d="M47 1l1.500 3.500 3.500.3-2.700 2.400.9 3.600-3.200-2-3.200 2 .9-3.600L42 4.800l3.500-.3z" fill="#ffcf3f" />
    <g fill="#ffe27a"><circle cx="45" cy="21" r="1" /><circle cx="49" cy="24" r="1" /><circle cx="43" cy="33" r="1" /><circle cx="51" cy="36" r="1" /></g>
  </svg>
);

function Taskbar() {
  return (
    <div className="flex h-[50px] shrink-0 items-stretch bg-[linear-gradient(to_right,#1f2b30_0%,#24292b_25%,#323434_45%,#3a3b3b_65%,#343637_85%,#3a3c3d_100%)] font-['Open_Sans',sans-serif] text-white">
      <div className="flex w-[60px] items-center justify-center bg-[#243640]">
        <svg viewBox="0 0 20 20" className="size-5" fill="#fff"><path d="M0 3l8.500-1.200v7.700H0zM9.500 1.600L20 0v9.500H9.500zM0 10.500h8.500v7.700L0 17zM9.500 10.500H20V20L9.500 18.400z" /></svg>
      </div>
      <div className="flex w-[360px] items-center border border-[#bdbdbd] bg-[#f2f2f2] pl-[14px] text-[#333]">
        <svg viewBox="0 0 22 22" className="size-[22px]"><circle cx="13.500" cy="8" r="6.500" fill="none" stroke="#222" strokeWidth="1.700" /><path d="M9 12.500L1 21" stroke="#222" strokeWidth="1.700" /></svg>
        <span className="ml-[13px] text-[17.500px] tracking-[0.500px]">Поиск</span>
        <Fair />
      </div>
      <div className="flex w-[61px] items-center justify-center">
        <svg viewBox="0 0 20 20" className="size-5"><path d="M1 0v3h12V0M1 20v-3h12v3M1 5.500h12v9H1zM17.500 0v5M17.500 9v11" fill="none" stroke="#fff" strokeWidth="1.300" /><path d="M16 5.500h3v3h-3z" fill="#fff" /></svg>
      </div>
      {apps.map((a, i) => (
        <div key={i} className={`flex w-[62.100px] flex-col ${a.active ? "bg-linear-to-r from-[#636363] from-92% to-[#474747] to-92%" : ""}`}>
          <div className="flex h-[47px] items-center justify-center pt-[3px] pl-[3px]">{a.icon}</div>
          {a.open && (
            <div className={`flex ${a.active ? "w-[57px] self-start" : "w-[51px] self-center"}`}>
              <span className={`h-[3px] bg-[#fdd5b5] ${a.stacked ? "w-[41px]" : "w-full"}`} />
              {a.stacked && <span className="ml-px h-[3px] flex-1 bg-[#a8917f]" />}
            </div>
          )}
        </div>
      ))}
      <div className="ml-auto flex items-center">
        <svg viewBox="0 0 16 10" className="h-[10px] w-4"><path d="M1 9l7-7.500L15 9" fill="none" stroke="#fff" strokeWidth="1.500" /></svg>
        <svg viewBox="0 0 22 20" className="ml-[12px] h-5 w-[22px]"><path d="M3 4l14-3v17L3 16zM13 6.500a4 4 0 1 0 1 5M14 4.500v3h-3" fill="none" stroke="#fff" strokeWidth="1.300" /><circle cx="17.500" cy="15.500" r="4.500" fill="#2f7fd0" /></svg>
        <svg viewBox="0 0 22 16" className="ml-[7px] h-4 w-[22px]"><path d="M1 5.500h3l4.500-4v13L4 10.500H1zM11.500 5.500c1 1.500 1 3.500 0 5M14.500 3.500c2 2.500 2 6.500 0 9M17.500 1.500c3 4 3 9 0 13" fill="none" stroke="#fff" strokeWidth="1.200" /></svg>
        <svg viewBox="0 0 20 16" className="ml-[9px] h-4 w-5"><path d="M4 5h14v9H4z" fill="none" stroke="#fff" strokeWidth="1.200" /><path d="M7 7h9.500v5.500H6zM18.500 7.500H20v4h-1.500zM0 2h6v5H4v4H2V7H0zM1 0h1v3H1zM4 0h1v3H4z" fill="#fff" /></svg>
        <svg viewBox="0 0 18 18" className="ml-[14px] size-[17px]"><path d="M1 17C1 8 8 1 17 1M5 17C5 10 10 5 17 5" fill="none" stroke="#999" strokeWidth="1.300" /><path d="M9 17c0-4 4-8 8-8M13 17c0-2 2-4 4-4" fill="none" stroke="#fff" strokeWidth="1.300" /><circle cx="16" cy="16" r="1.500" fill="#fff" /></svg>
        <span className="ml-[12px] text-[14.500px] tracking-[-0.300px]">ENG</span>
        <div className="ml-[10px] flex w-[82px] flex-col items-center text-[14px] leading-[23px] tracking-[-0.250px]"><span>0:48</span><span>19.12.2024</span></div>
        <div className="relative ml-[17px] h-[34px] w-[45px]">
          <svg viewBox="0 0 20 20" className="mt-[3px] size-5"><path d="M0 0h20v15h-8l-5 5v-5H0z" fill="#fff" /><path d="M3 4h14M3 7.500h14M3 11h10" stroke="#3a3c3d" strokeWidth="1.400" /></svg>
          <span className="absolute top-[15px] left-[9px] flex size-[20px] items-center justify-center rounded-full border border-[#bbb] bg-[#3a3c3d] text-[13px] font-semibold">3</span>
        </div>
      </div>
      <span className="w-px bg-[#777]" />
      <span className="w-[5px]" />
    </div>
  );
}

export default function App() {
  return (
    <div className="flex h-[1080px] w-[1920px] flex-col overflow-hidden bg-white">
      <TabStrip />
      <Toolbar />
      <Bookmarks />
      <div className="flex min-h-0 flex-1">
        <div className="flex w-[1899px] flex-col">
          <Header />
          <TopicBar />
          <div className="flex min-h-0 flex-1">
            <Sidebar />
            <Main />
            <SideAd />
          </div>
        </div>
        <PageScrollbar />
      </div>
      <Taskbar />
    </div>
  );
}
